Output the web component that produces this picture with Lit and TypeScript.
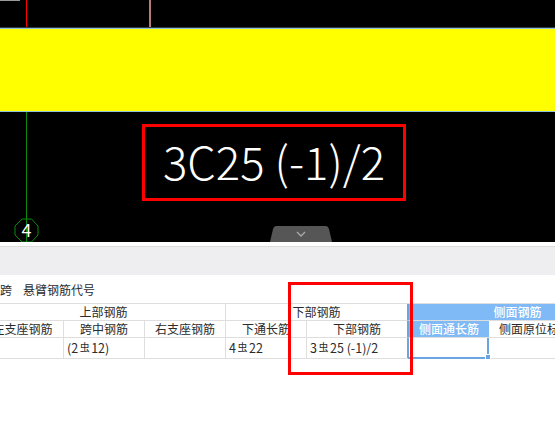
import { LitElement, html, css } from "lit";
import { customElement } from "lit/decorators.js";

const bar = html`<span class="bar">虫</span>`;

@customElement("app-root")
export class AppRoot extends LitElement {
  static styles = css`
    :host {
      display: block;
      position: relative;
      width: 555px;
      height: 427px;
      overflow: hidden;
      background: #fff;
      font-family: "Noto Sans CJK SC", "Noto Sans", sans-serif;
      font-size: 12px;
      color: #2b2b2b;
    }
    .canvas {
      position: relative;
      height: 242px;
      background: #000;
      overflow: hidden;
    }
    .canvas > * { position: absolute; }
    .tick { left: 0; top: 0; width: 20px; height: 1px; background: #999; }
    .red-axis { left: 26px; top: 0; width: 1px; height: 28px; background: #f00; }
    .pink-axis { left: 149px; top: 0; width: 2px; height: 28px; background: #b87a7a; }
    .beam-edge { left: 0; right: 0; top: 27px; height: 1px; background: #2f3a44; }
    .beam {
      left: 0; right: 0; top: 28px; height: 84px;
      box-sizing: border-box;
      background: #ff0;
      border-top: 1px solid #8fc4d8;
      border-bottom: 1px solid #8fc4d8;
    }
    .green-axis { left: 26px; top: 112px; width: 1px; height: 130px; background: #0a8a0a; }
    .axis-mark { left: 14px; top: 218px; width: 25px; height: 25px; }
    .axis-num {
      left: 14px; top: 217px; width: 25px; height: 25px;
      text-align: center; line-height: 25px;
      color: #fff; font-size: 18px;
    }
    .big {
      left: 143px; top: 124px; width: 262px; height: 75px;
      text-align: center; line-height: 72px;
      color: #fff; font-size: 45.500px; font-weight: 300;
      white-space: nowrap;
    }
    .tab { left: 270px; top: 226px; width: 62px; height: 16px; }
    .gap {
      height: 4px;
      background: #fff;
      border-bottom: 1px solid #dcdcdc;
    }
    .band { height: 28px; background: #eeeef0; }
    .tabs {
      height: 28px;
      display: flex;
      gap: 11px;
      align-items: center;
      white-space: nowrap;
    }
    .table {
      display: grid;
      grid-template-columns: 82px 81px 81px 81px 101px 81px 81px 58px;
      grid-template-rows: 17px 17px 20px;
      margin-left: -18px;
      width: 646px;
      border-top: 1px solid #dedede;
      border-bottom: 1px solid #dedede;
    }
    .c {
      box-sizing: border-box;
      border-right: 1px solid #dedede;
      border-bottom: 1px solid #dedede;
      text-align: center;
      line-height: 16px;
      white-space: nowrap;
      overflow: hidden;
    }
    .span3 { grid-column: span 3; }
    .span2 { grid-column: span 2; }
    .data {
      text-align: left;
      border-bottom: 0;
      line-height: 20px;
      padding-left: 3px;
      font-size: 12.500px;
    }
    .edge { border-right-color: #6ba5e0; }
    .head {
      background: #7fb9f6;
      color: #fff;
      font-weight: 500;
      border-right: 0;
    }
    .wide-head { padding-right: 2px; }
    .plain { grid-column: span 2; text-align: left; padding-left: 10px; }
    .first-blue { border-left: 1px solid #6ba5e0; }
    .active {
      position: relative;
      overflow: visible;
      border: 2px solid #6ba5e0;
      border-top: 0;
      border-left-width: 1px;
      height: 21px;
    }
    .handle {
      position: absolute;
      right: -4px; bottom: -3px;
      width: 4px; height: 4px;
      background: #6ba5e0;
      border: 1px solid #fff;
    }
    .bar {
      font-size: 10px;
      position: relative;
      top: -2px;
      margin: 0 1.500px;
    }
    .box {
      position: absolute;
      box-sizing: border-box;
      border: 3px solid #f00;
      pointer-events: none;
    }
    .box-cad { left: 142px; top: 124px; width: 264px; height: 77px; }
    .box-table { left: 288px; top: 282px; width: 125px; height: 93px; }
  `;

  render() {
    return html`
      <div class="canvas">
        <div class="tick"></div>
        <div class="red-axis"></div>
        <div class="pink-axis"></div>
        <div class="beam-edge"></div>
        <div class="beam"></div>
        <div class="green-axis"></div>
        <svg class="axis-mark" viewBox="0 0 25 25">
          <polygon points="8,1 17.500,1 24,8 24,17 17.500,24 8,24 1,17 1,8" fill="none" stroke="#0a8a0a" stroke-width="1"></polygon>
        </svg>
        <div class="axis-num">4</div>
        <div class="big">3C25 (-1)/2</div>
        <svg class="tab" viewBox="0 0 62 16">
          <path d="M5 0H56Q58 0 59 3L62 16H0L3 3Q4 0 6 0Z" fill="#565656"></path>
          <path d="M27 6l4 4l4-4" fill="none" stroke="#aaa" stroke-width="1.300"></path>
        </svg>
      </div>
      <div class="gap"></div>
      <div class="band"></div>
      <div class="tabs"><span>跨</span><span>悬臂钢筋代号</span></div>
      <div class="table">
        <div class="c span3">上部钢筋</div>
        <div class="c span2 edge">下部钢筋</div>
        <div class="c head first-blue span3 wide-head">侧面钢筋</div>

        <div class="c">左支座钢筋</div>
        <div class="c">跨中钢筋</div>
        <div class="c">右支座钢筋</div>
        <div class="c">下通长筋</div>
        <div class="c edge">下部钢筋</div>
        <div class="c head first-blue">侧面通长筋</div>
        <div class="c plain">侧面原位标</div>

        <div class="c data"></div>
        <div class="c data">(2${bar}12)</div>
        <div class="c data"></div>
        <div class="c data">4${bar}22</div>
        <div class="c data edge">3${bar}25 (-1)/2</div>
        <div class="c data active"><span class="handle"></span></div>
        <div class="c data span2"></div>
      </div>
      <div class="box box-cad"></div>
      <div class="box box-table"></div>
    `;
  }
}
